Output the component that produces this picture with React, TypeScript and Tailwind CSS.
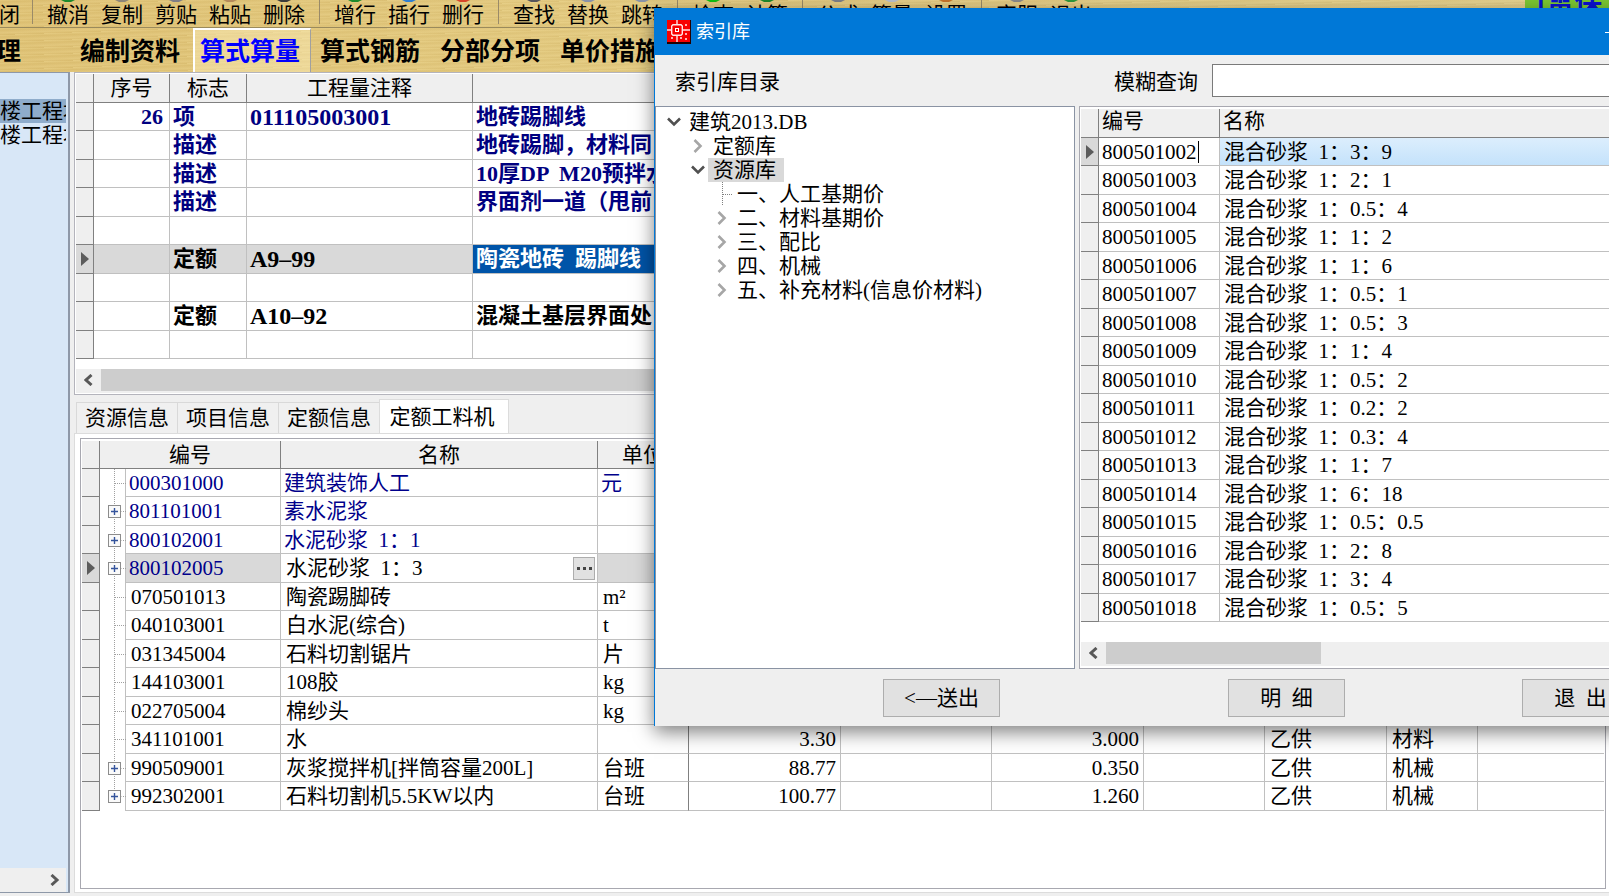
import { ReactNode } from "react";

const FONT = "font-['Liberation_Serif','Noto_Sans_CJK_SC',serif]";
const GOLD =
  "bg-[repeating-linear-gradient(178deg,rgba(255,240,180,0.16)_0px,rgba(150,110,30,0.06)_2px,rgba(255,240,190,0.1)_5px,rgba(150,110,30,0.08)_7px),linear-gradient(90deg,#dfc275,#e3ca80_40%,#e6d28e)]";

type Tool = { label: string; icon: string };

const toolGroups: Tool[][] = [
  [
    { label: "撤消", icon: "#1c8a2c" },
    { label: "复制", icon: "#8c8478" },
    { label: "剪贴", icon: "#7f7f86" },
    { label: "粘贴", icon: "#b58a5a" },
    { label: "删除", icon: "#3a3a3a" },
  ],
  [
    { label: "增行", icon: "#1c8a2c" },
    { label: "插行", icon: "#2f7fd0" },
    { label: "删行", icon: "#d8452a" },
  ],
  [
    { label: "查找", icon: "#55555c" },
    { label: "替换", icon: "#8a93a8" },
    { label: "跳转", icon: "#8a93a8" },
  ],
  [
    { label: "检查", icon: "#12c212" },
    { label: "计算", icon: "#1c8a2c" },
  ],
  [
    { label: "公式", icon: "#7c7f88" },
    { label: "算量", icon: "#b9c0cc" },
    { label: "设置", icon: "#c8742a" },
  ],
  [
    { label: "客服", icon: "#8a8a8a" },
    { label: "退出", icon: "#2f9a3c" },
  ],
];

const mainTabs = ["编制资料", "算式算量", "算式钢筋", "分部分项", "单价措施"];

type ItemRow = { no?: string; flag?: string; note?: string; text?: string; tone?: "navy"; current?: boolean };

const itemRows: ItemRow[] = [
  { no: "26", flag: "项", note: "011105003001", text: "地砖踢脚线", tone: "navy" },
  { flag: "描述", text: "地砖踢脚，材料同", tone: "navy" },
  { flag: "描述", text: "10厚DP  M20预拌水", tone: "navy" },
  { flag: "描述", text: "界面剂一道（甩前", tone: "navy" },
  {},
  { flag: "定额", note: "A9–99", text: "陶瓷地砖  踢脚线", current: true },
  {},
  { flag: "定额", note: "A10–92", text: "混凝土基层界面处" },
  {},
];

const infoTabs = ["资源信息", "项目信息", "定额信息", "定额工料机"];

type Resource = {
  code: string;
  name: string;
  unit?: string;
  price?: string;
  qty?: string;
  supply?: string;
  kind?: string;
  expand?: boolean;
  blue?: boolean;
  current?: boolean;
};

const resources: Resource[] = [
  { code: "000301000", name: "建筑装饰人工", unit: "元", blue: true },
  { code: "801101001", name: "素水泥浆", expand: true, blue: true },
  { code: "800102001", name: "水泥砂浆  1：1", expand: true, blue: true },
  { code: "800102005", name: "水泥砂浆  1：3", expand: true, current: true },
  { code: "070501013", name: "陶瓷踢脚砖", unit: "m²" },
  { code: "040103001", name: "白水泥(综合)", unit: "t" },
  { code: "031345004", name: "石料切割锯片", unit: "片" },
  { code: "144103001", name: "108胶", unit: "kg" },
  { code: "022705004", name: "棉纱头", unit: "kg" },
  { code: "341101001", name: "水", price: "3.30", qty: "3.000", supply: "乙供", kind: "材料" },
  { code: "990509001", name: "灰浆搅拌机[拌筒容量200L]", unit: "台班", price: "88.77", qty: "0.350", supply: "乙供", kind: "机械", expand: true },
  { code: "992302001", name: "石料切割机5.5KW以内", unit: "台班", price: "100.77", qty: "1.260", supply: "乙供", kind: "机械", expand: true },
];

const mortars: [string, string][] = [
  ["800501002", "1：3：9"],
  ["800501003", "1：2：1"],
  ["800501004", "1：0.5：4"],
  ["800501005", "1：1：2"],
  ["800501006", "1：1：6"],
  ["800501007", "1：0.5：1"],
  ["800501008", "1：0.5：3"],
  ["800501009", "1：1：4"],
  ["800501010", "1：0.5：2"],
  ["800501011", "1：0.2：2"],
  ["800501012", "1：0.3：4"],
  ["800501013", "1：1：7"],
  ["800501014", "1：6：18"],
  ["800501015", "1：0.5：0.5"],
  ["800501016", "1：2：8"],
  ["800501017", "1：3：4"],
  ["800501018", "1：0.5：5"],
];

function Pointer() {
  return (
    <svg width="8" height="14" viewBox="0 0 8 14" className="mx-auto block">
      <path d="M0 0 L8 7 L0 14 Z" fill="#5c5c5c" />
    </svg>
  );
}

function ScrollArrow({ dir }: { dir: "left" | "right" }) {
  return (
    <svg width="10" height="12" viewBox="0 0 10 12" className="block">
      <path
        d={dir === "left" ? "M7.5 1 L2 6 L7.5 11" : "M1.5 1 L7 6 L1.5 11"}
        fill="none"
        stroke="#585858"
        strokeWidth="3"
      />
    </svg>
  );
}

function HScroll({ thumb }: { thumb: string }) {
  return (
    <div className="flex h-6 bg-[#efefef]">
      <button type="button" aria-label="向左滚动" className="flex h-[22px] w-[25px] shrink-0 items-center justify-center">
        <ScrollArrow dir="left" />
      </button>
      <div className={thumb} />
    </div>
  );
}

function RowHead({ current }: { current?: boolean }) {
  return (
    <td className={`border-r border-b border-[#808080] p-0 align-middle ${current ? "bg-[#d9d9d9]" : "bg-[#efefef]"}`}>
      {current && <Pointer />}
    </td>
  );
}

function Branch({ expand, last }: { expand?: boolean; last: boolean }) {
  return (
    <svg width="26" height="28" viewBox="0 0 26 28" className="block">
      <path d={last ? "M14.5 0 V14" : "M14.5 0 V28"} stroke="#a0a0a0" strokeDasharray="1 1" />
      <path d="M15 14.5 H26" stroke="#a0a0a0" strokeDasharray="1 1" />
      {expand && (
        <g>
          <rect x="7.5" y="7.5" width="14" height="14" fill="#fff" />
          <rect x="8.5" y="8.5" width="12" height="12" fill="#fafafa" stroke="#8c8c8c" />
          <path d="M11 14.5 H18 M14.5 11 V18" stroke="#34549c" strokeWidth="1.4" />
        </g>
      )}
    </svg>
  );
}

function Chevron({ open }: { open: boolean }) {
  return open ? (
    <svg width="14" height="10" viewBox="0 0 14 10" className="block">
      <path d="M1 1.5 L7 7.5 L13 1.5" fill="none" stroke="#505050" strokeWidth="2.6" />
    </svg>
  ) : (
    <svg width="10" height="14" viewBox="0 0 10 14" className="block">
      <path d="M1.5 1 L7.5 7 L1.5 13" fill="none" stroke="#a6a6a6" strokeWidth="2.6" />
    </svg>
  );
}

function TreeNode({ indent, mark, selected, children }: { indent: string; mark: ReactNode; selected?: boolean; children: ReactNode }) {
  return (
    <li className={`flex h-6 items-center ${indent}`}>
      <span className="flex w-5 shrink-0 justify-center">{mark}</span>
      <span className={`h-6 pl-[5px] leading-6 whitespace-nowrap ${selected ? "bg-[#d9d9d9] pr-2" : ""}`}>{children}</span>
    </li>
  );
}

function Toolbar() {
  return (
    <div className="flex h-7 shrink-0 overflow-hidden border-b border-[#9a8a5c]">
      <div className="flex w-6 shrink-0 flex-col items-end overflow-hidden pr-1">
        <i className="h-1 w-4 shrink-0" />
        <span className="leading-[22px] whitespace-nowrap">关闭</span>
      </div>
      {toolGroups.map((group, g) => (
        <div key={g} className="flex shrink-0">
          <div className="mx-2 h-6 w-px bg-[#9a8a68]" />
          {group.map((tool) => (
            <button key={tool.label} type="button" className="flex w-[54px] flex-col items-center whitespace-nowrap">
              <svg width="20" height="4" viewBox="0 0 20 4" className="block shrink-0">
                <path d="M3 0 H17 L13 2 H7 Z" fill={tool.icon} />
              </svg>
              <span className="leading-[22px]">{tool.label}</span>
            </button>
          ))}
        </div>
      ))}
      <a
        href="#news"
        className="ml-auto flex h-7 w-[84px] shrink-0 items-start overflow-hidden bg-[#7cc832] pl-3 text-[28px] leading-[8px] font-bold whitespace-nowrap text-[#0a10d0]"
      >
        [雷保
      </a>
    </div>
  );
}

function MainTabs() {
  return (
    <nav className="flex h-11 shrink-0 overflow-hidden text-[25px] leading-10 font-bold">
      <span className="flex w-[73px] shrink-0">
        <button type="button" className="flex w-[21px] justify-end overflow-hidden pt-1 whitespace-nowrap">管理</button>
      </span>
      {mainTabs.map((tab) => (
        <button
          key={tab}
          type="button"
          className={
            tab === "算式算量"
              ? "mr-0.5 w-[118px] shrink-0 border-t-2 border-r border-l-2 border-t-white border-r-[#a0a0a0] border-l-white bg-[#fff3c4]/40 pt-0.5 pl-[5px] text-left text-[#0000ff]"
              : "w-[120px] shrink-0 pt-1 pl-[7px] text-left"
          }
        >
          {tab}
        </button>
      ))}
    </nav>
  );
}

function ItemGrid() {
  return (
    <section className="shrink-0 border border-[#b4b4bc] bg-white pt-px pr-0 pb-px pl-px">
      <table className="w-full table-fixed border-separate border-spacing-0 text-[22px] leading-6">
        <colgroup>
          <col className="w-[18px]" />
          <col className="w-[76px]" />
          <col className="w-[77px]" />
          <col className="w-[226px]" />
          <col />
        </colgroup>
        <thead>
          <tr className="h-[29px] bg-[#efefef] text-[21px]">
            <th className="border-r border-b border-[#808080] p-0" />
            {["序号", "标志", "工程量注释", ""].map((h) => (
              <th key={h} className="border-r border-b border-[#808080] p-0 font-normal">{h}</th>
            ))}
          </tr>
        </thead>
        <tbody className="font-bold">
          {itemRows.map((row, i) => (
            <tr
              key={i}
              className={`odd:h-[28px] even:h-[29px] ${row.current ? "bg-[#d9d9d9]" : "bg-white"} ${row.tone ? "text-[#000080]" : "text-black"}`}
            >
              <RowHead current={row.current} />
              <td className="border-r border-b border-[#c0c0c0] py-0 pr-1.5 pl-0 text-right">{row.no}</td>
              <td className="border-r border-b border-[#c0c0c0] px-[3px] py-0">{row.flag}</td>
              <td className="border-r border-b border-[#c0c0c0] px-[3px] py-0 text-[24px] leading-6">{row.note}</td>
              <td
                className={`overflow-hidden border-b border-[#c0c0c0] px-[3px] py-0 whitespace-pre ${row.current ? "bg-[#0054a8] text-white" : ""}`}
              >
                {row.text}
              </td>
            </tr>
          ))}
        </tbody>
      </table>
      <div className="mt-2.5">
        <HScroll thumb="h-[22px] w-3/5 bg-[#cdcdcd]" />
      </div>
    </section>
  );
}

function ResourceGrid() {
  const line = "border-r border-b border-[#c0c0c0] py-0 whitespace-pre";
  return (
    <section className="mx-[5px] mt-1 mr-[3px] mb-[3px] flex-1 border border-[#a8a8b0] bg-white px-px pt-0.5">
      <table className="w-full table-fixed border-separate border-spacing-0 text-[21px] leading-6">
        <colgroup>
          <col className="w-[18px]" />
          <col className="w-[26px]" />
          <col className="w-[155px]" />
          <col className="w-[317px]" />
          <col className="w-[91px]" />
          <col className="w-[152px]" />
          <col className="w-[151px]" />
          <col className="w-[152px]" />
          <col className="w-[121px]" />
          <col className="w-[122px]" />
          <col className="w-[91px]" />
          <col />
        </colgroup>
        <thead>
          <tr className="h-[28px] bg-[#efefef]">
            <th className="border-r border-b border-[#808080] p-0" />
            <th colSpan={2} className="border-r border-b border-[#808080] p-0 font-normal">编号</th>
            <th className="border-r border-b border-[#808080] p-0 font-normal">名称</th>
            <th className="border-r border-b border-[#808080] p-0 font-normal">单位</th>
            <th colSpan={7} className="border-b border-[#808080] p-0" />
          </tr>
        </thead>
        <tbody>
          {resources.map((r, i) => {
            const tone = r.blue ? "pl-[3px] text-[#00008b]" : "pl-[5px]";
            return (
              <tr key={r.code} className="odd:h-[28px] even:h-[29px]">
                <RowHead current={r.current} />
                <td className="border-r border-[#c0c0c0] p-0 align-top">
                  <Branch expand={r.expand} last={i === resources.length - 1} />
                </td>
                <td className={`${line} pr-1 ${r.current ? "bg-[#d9d9d9] pl-[3px] text-[#00008b]" : tone}`}>{r.code}</td>
                <td className={`${line} pr-1 ${tone}`}>
                  {r.current ? (
                    <span className="flex items-center justify-between">
                      {r.name}
                      <button
                        type="button"
                        aria-label="选择"
                        className="-mr-0.5 flex h-[23px] w-[22px] items-center justify-center gap-[3px] border border-[#adadad] bg-[#e1e1e1]"
                      >
                        <i className="size-[3px] bg-[#444]" />
                        <i className="size-[3px] bg-[#444]" />
                        <i className="size-[3px] bg-[#444]" />
                      </button>
                    </span>
                  ) : (
                    r.name
                  )}
                </td>
                <td
                  className={`border-r border-b border-r-[#808080] border-b-[#c0c0c0] py-0 pr-1 ${tone} ${r.current ? "bg-[#d9d9d9]" : ""}`}
                >
                  {r.unit}
                </td>
                <td className={`${line} pr-1 text-right`}>{r.price}</td>
                <td className={line} />
                <td className={`${line} pr-1 text-right`}>{r.qty}</td>
                <td className={line} />
                <td className={`${line} pl-[5px]`}>{r.supply}</td>
                <td className={`${line} pl-[5px]`}>{r.kind}</td>
                <td className="border-b border-[#c0c0c0] p-0" />
              </tr>
            );
          })}
        </tbody>
      </table>
    </section>
  );
}

function AppIcon() {
  return (
    <svg width="24" height="24" viewBox="0 0 24 24" className="block">
      <rect width="24" height="24" fill="#200" />
      <rect width="23" height="22" fill="#f80000" />
      <g fill="none" stroke="#ffe4e4" strokeWidth="1.4">
        <path d="M6 4.7 H14 L15.3 6 V14 L14 15.3 H6 L4.7 14 V6 Z" />
        <path d="M10 0 V4.7 M10 15.3 V22 M0 10 H4.7 M15.3 10 H23" />
      </g>
      <rect x="8.5" y="8.5" width="3" height="3" fill="none" stroke="#fff" strokeWidth="1" />
      <g fill="#ffb0b0">
        <rect x="18" y="4" width="2" height="2" />
        <rect x="4" y="17" width="2" height="2" />
        <rect x="13" y="17" width="2" height="2" />
        <rect x="18" y="13" width="2" height="2" />
        <rect x="18" y="18" width="2" height="2" />
      </g>
    </svg>
  );
}

function IndexDialog() {
  const action = "h-[38px] w-[117px] border border-[#adadad] bg-[#e1e1e1] leading-9 whitespace-pre";
  return (
    <div
      role="dialog"
      aria-labelledby="dlg-title"
      className="absolute top-2 -right-[90px] left-[654px] flex flex-col border-t border-l border-[#0078d7] bg-[#efefef] shadow-[0_6px_18px_rgba(0,0,0,0.5)]"
    >
      <header className="flex h-[46px] items-center gap-[5px] bg-[#0078d7] pl-3 text-[18px] text-white">
        <AppIcon />
        <h1 id="dlg-title">索引库</h1>
        <button type="button" aria-label="最小化" className="mr-[73px] ml-auto flex h-8 w-[21px] items-center">
          <i className="h-px w-[16px] bg-white" />
        </button>
      </header>
      <div className="flex h-[51px] items-center pl-5">
        <span className="w-[439px] shrink-0 pt-1">索引库目录</span>
        <label htmlFor="fuzzy" className="w-[98px] shrink-0 pt-1">模糊查询</label>
        <input id="fuzzy" type="text" className="mb-px h-[33px] flex-1 border border-[#7a7a7a] bg-white px-1 outline-none" />
      </div>
      <div className="flex h-[563px] gap-1">
        <ul className="w-[420px] shrink-0 border border-[#8a93a3] bg-white pt-[3px] pl-2">
          <TreeNode indent="" mark={<Chevron open />}>建筑2013.DB</TreeNode>
          <TreeNode indent="pl-6" mark={<Chevron open={false} />}>定额库</TreeNode>
          <TreeNode indent="pl-6" mark={<Chevron open />} selected>资源库</TreeNode>
          <TreeNode
            indent="pl-12"
            mark={
              <svg width="20" height="24" viewBox="0 0 20 24" className="block">
                <path d="M10.5 0 V23 M11 12.5 H20" fill="none" stroke="#808080" strokeDasharray="1 1" />
              </svg>
            }
          >
            一、人工基期价
          </TreeNode>
          <TreeNode indent="pl-12" mark={<Chevron open={false} />}>二、材料基期价</TreeNode>
          <TreeNode indent="pl-12" mark={<Chevron open={false} />}>三、配比</TreeNode>
          <TreeNode indent="pl-12" mark={<Chevron open={false} />}>四、机械</TreeNode>
          <TreeNode indent="pl-12" mark={<Chevron open={false} />}>五、补充材料(信息价材料)</TreeNode>
        </ul>
        <div className="flex min-w-0 flex-1 flex-col border border-[#a8a8b0] bg-white px-px pt-0.5 pb-0.5">
          <table className="w-full table-fixed border-separate border-spacing-0 leading-6">
            <colgroup>
              <col className="w-[18px]" />
              <col className="w-[121px]" />
              <col />
            </colgroup>
            <thead>
              <tr className="h-[28px] bg-[#efefef] text-left">
                <th className="border-r border-b border-[#808080] p-0" />
                <th className="border-r border-b border-[#808080] px-[3px] pt-0 pb-1 font-normal">编号</th>
                <th className="border-b border-[#808080] px-[3px] pt-0 pb-1 font-normal">名称</th>
              </tr>
            </thead>
            <tbody>
              {mortars.map(([code, ratio], i) => (
                <tr key={code} className="odd:h-[28px] even:h-[29px]">
                  <RowHead current={i === 0} />
                  <td className="border-r border-b border-[#c0c0c0] px-[3px] py-0">
                    {i === 0 ? (
                      <span className="flex items-center">
                        <input aria-label="编号" defaultValue={code} className="h-6 w-[96px] bg-transparent p-0 outline-none" />
                        <i className="h-[22px] w-px bg-black" />
                      </span>
                    ) : (
                      code
                    )}
                  </td>
                  <td
                    className={`border-b border-[#c0c0c0] px-1 py-0 whitespace-pre ${i === 0 ? "bg-linear-to-b from-[#dceefd] to-[#c4e2fb]" : ""}`}
                  >
                    {"混合砂浆  " + ratio}
                  </td>
                </tr>
              ))}
            </tbody>
          </table>
          <div className="mt-auto">
            <HScroll thumb="h-[22px] w-[215px] bg-[#cdcdcd]" />
          </div>
        </div>
      </div>
      <footer className="flex h-[57px] items-center pl-[228px]">
        <button type="button" className={action}>&lt;—送出</button>
        <button type="button" className={`${action} ml-[228px]`}>{"明  细"}</button>
        <button type="button" className={`${action} ml-[177px]`}>{"退  出"}</button>
      </footer>
    </div>
  );
}

export default function App() {
  return (
    <div className={`relative flex h-screen w-full flex-col overflow-hidden bg-[#efefef] text-[21px] text-black ${FONT}`}>
      <div className={`shrink-0 ${GOLD}`}>
        <Toolbar />
        <MainTabs />
      </div>
      <div className="flex min-h-0 flex-1">
        <aside className="mb-[3px] flex w-[70px] shrink-0 flex-col border-t border-r-2 border-b border-[#8e98a8] bg-[#d8e7f7] pr-0.5">
          <ul className="flex-1 overflow-hidden pt-[26px] leading-6 whitespace-nowrap">
            <li className="overflow-hidden bg-[#8faccb]">楼工程块</li>
            <li className="overflow-hidden">楼工程块</li>
          </ul>
          <div className="flex h-6 items-center justify-end bg-[#efefef] pr-1.5">
            <button type="button" aria-label="向右滚动">
              <ScrollArrow dir="right" />
            </button>
          </div>
        </aside>
        <main className="ml-1 flex min-w-0 flex-1 flex-col">
          <ItemGrid />
          <div className="flex shrink-0 items-end pt-1 pl-0.5">
            {infoTabs.map((tab) => (
              <button
                key={tab}
                type="button"
                className={
                  tab === "定额工料机"
                    ? "h-[34px] w-[130px] border border-b-0 border-[#dcdcdc] bg-white pr-1 leading-7"
                    : "h-[31px] w-[101px] border-t border-l border-[#d9d9d9] bg-[#f0f0f0] leading-[30px]"
                }
              >
                {tab}
              </button>
            ))}
          </div>
          <div className="mb-[3px] flex min-h-0 flex-1 flex-col border border-r-0 border-[#dcdcdc] bg-white">
            <ResourceGrid />
          </div>
        </main>
      </div>
      <IndexDialog />
    </div>
  );
}
